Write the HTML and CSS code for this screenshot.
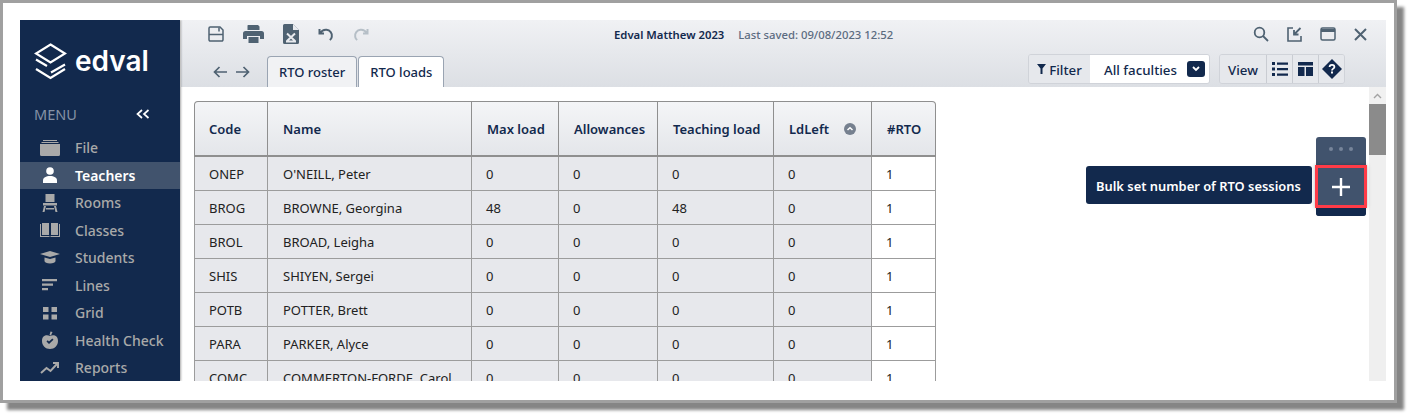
FILE: index.html
```html
<!DOCTYPE html>
<html>

<head>
    <title>Edval</title>
    <meta charset="utf-8">
    <link rel="stylesheet" href="styles.css">
</head>

<body>
    <div class="frame">
        <div class="app">
            <aside class="sidebar">
                <div class="logo">
                    <svg width="33" height="38" viewBox="0 0 33 38" fill="none" stroke="#fff" stroke-width="2.2">
                        <path d="M16.500 1.500 31 10.500 16.500 19.500 2 10.500Z" />
                        <path d="M2 16.500 13 23M31 21.500 17 29.500" />
                        <path d="M2 26 16.500 35 31 26" />
                    </svg>
                    <span class="wordmark">edval</span>
                </div>
                <div class="menu-title">
                    <span>MENU</span>
                    <svg width="14" height="10" viewBox="0 0 14 10" fill="none" stroke="#fff" stroke-width="1.7">
                        <path d="M6 1 L1.500 5 L6 9 M12.500 1 L8 5 L12.500 9" />
                    </svg>
                </div>
                <nav class="menu">
                    <a class="item">
                        <svg class="ico" viewBox="0 0 20 16"><path d="M3 0h14v1H3zM1.500 2h17v1h-17zM0 4h20v10.500a1.500 1.500 0 0 1-1.500 1.500h-17A1.500 1.500 0 0 1 0 14.500z" /></svg>
                        File
                    </a>
                    <a class="item active">
                        <svg class="ico" viewBox="0 0 20 16"><circle cx="10" cy="4" r="3.800" /><path d="M3 16v-2.500C3 10.500 6 9 10 9s7 1.500 7 4.500V16z" /></svg>
                        Teachers
                    </a>
                    <a class="item">
                        <svg class="ico" viewBox="0 0 20 18"><path d="M5.500 0h9v8h-9zM3 9h14v2.500H3zM4 12h2l-1.500 6H2.500zM14 12h2l1.500 6h-2zM6 14h8v1.500H6z" /></svg>
                        Rooms
                    </a>
                    <a class="item">
                        <svg class="ico" viewBox="0 0 20 16"><path d="M2 1h7v12H2zM11 1h7v12h-7zM0 2h1v12h8.500v1H0zM19 2h1v13h-9.500v-1H19z" /></svg>
                        Classes
                    </a>
                    <a class="item">
                        <svg class="ico" viewBox="0 0 20 16"><path d="M10 1 20 4 10 7 0 4zM4.500 7.500 10 9l5.500-1.500V11c0 1.500-2.500 2.500-5.500 2.500S4.500 12.500 4.500 11z" /></svg>
                        Students
                    </a>
                    <a class="item">
                        <svg class="ico" viewBox="0 0 20 16"><path d="M2 2h15v2.200H2zM2 6.500h11v2.200H2zM2 11h6v2.200H2z" /></svg>
                        Lines
                    </a>
                    <a class="item">
                        <svg class="ico" viewBox="0 0 20 16"><path d="M3 2h5.500v5H3zM11.500 2H17v5h-5.500zM3 9.500h5.500v5H3zM11.500 9.500H17v5h-5.500z" /></svg>
                        Grid
                    </a>
                    <a class="item">
                        <svg class="ico" viewBox="0 0 20 18"><path fill-rule="evenodd" d="M10 5C13 3.500 18 4 18 10c0 4.500-3.500 8-8 8s-8-3.500-8-8c0-6 5-6.500 8-5zM6.500 10.500 9 13l4.500-4.300-1.200-1.200L9 10.600 7.700 9.300z" /><path d="M9.500 4 10.500 0.500 12.500 1 11 4.500z" /></svg>
                        Health Check
                    </a>
                    <a class="item">
                        <svg class="ico ico-line" viewBox="0 0 20 16"><path d="M1 13 6.500 8l4 3L17 4" /><path d="M13 3h5v5" /></svg>
                        Reports
                    </a>
                </nav>
            </aside>

            <div class="main">
                <header class="top">
                    <div class="toolbar">
                        <div class="tools">
                            <svg class="tool" width="16" height="16" viewBox="0 0 16 16" fill="none" stroke="#4f6272" stroke-width="1.500">
                                <path d="M1 2.200A1.200 1.200 0 0 1 2.200 1h9.800L15 4v9.800a1.200 1.200 0 0 1-1.200 1.200H2.200A1.200 1.200 0 0 1 1 13.800z" />
                                <path d="M1 8.500h14M11 1.500v4" />
                            </svg>
                            <svg class="tool" width="21" height="18" viewBox="0 0 21 18" fill="#4f6272">
                                <path fill-rule="evenodd" d="M5 0h10l1.500 1.500V5H4.500V.5zM2.500 6h16A2.500 2.500 0 0 1 21 8.500V14h-4v-3H4v3H0V8.500A2.500 2.500 0 0 1 2.500 6z" />
                                <path d="M5.500 12h10v6h-10z" />
                            </svg>
                            <svg class="tool" width="16" height="20" viewBox="0 0 16 20">
                                <path fill="#4f6272" d="M1.500 0H10l6 6v12.500a1.500 1.500 0 0 1-1.500 1.500h-13A1.500 1.500 0 0 1 0 18.500v-17A1.500 1.500 0 0 1 1.500 0z" />
                                <path fill="#e8eaee" d="M10 0v6h6z" />
                                <path fill="none" stroke="#e8eaee" stroke-width="2" d="M4 9.500 12 17M12 9.500 4 17M3 17.500h10" />
                            </svg>
                            <svg class="tool" width="16" height="13" viewBox="0 0 16 13" fill="none" stroke="#4f6272" stroke-width="2">
                                <path d="M1.500 1v4.500H6M2 5.200C3.500 3 5.500 1.500 8.500 1.800c3.500.3 6 3.500 5.300 7-.2 1.300-1 2.500-2 3.200" />
                            </svg>
                            <svg class="tool" width="16" height="13" viewBox="0 0 16 13" fill="none" stroke="#b6bfc7" stroke-width="2">
                                <path d="M14.500 1v4.500H10M14 5.200C12.500 3 10.500 1.500 7.500 1.800c-3.500.3-6 3.500-5.300 7 .2 1.300 1 2.500 2 3.200" />
                            </svg>
                        </div>
                        <div class="title">
                            <b>Edval Matthew 2023</b>
                            <span>Last saved: 09/08/2023 12:52</span>
                        </div>
                        <div class="win">
                            <svg width="16" height="16" viewBox="0 0 16 16" fill="none" stroke="#4f6272" stroke-width="1.800">
                                <circle cx="6.500" cy="6.500" r="4.800" /><path d="M10 10l5 5" />
                            </svg>
                            <svg width="15" height="15" viewBox="0 0 15 15" fill="none" stroke="#4f6272" stroke-width="1.600">
                                <path d="M6 1H1v13h13V9" /><path stroke-width="1.800" d="M13.500 1 7 7.500M7 3v4.500h4.500" />
                            </svg>
                            <svg width="16" height="14" viewBox="0 0 16 14" fill="none" stroke="#4f6272" stroke-width="1.500">
                                <rect x="1" y="1" width="14" height="12" rx="1.500" /><path stroke-width="3" d="M1 3.500h14" />
                            </svg>
                            <svg width="13" height="13" viewBox="0 0 13 13" fill="none" stroke="#4f6272" stroke-width="2">
                                <path d="M1 1l11 11M12 1 1 12" />
                            </svg>
                        </div>
                    </div>
                    <div class="tabbar">
                        <div class="arrows">
                            <svg width="14" height="12" viewBox="0 0 14 12" fill="none" stroke="#4f6272" stroke-width="1.700">
                                <path d="M14 6H1.500M6.500 1 1.500 6l5 5" />
                            </svg>
                            <svg width="14" height="12" viewBox="0 0 14 12" fill="none" stroke="#4f6272" stroke-width="1.700">
                                <path d="M0 6h12.500M7.500 1l5 5-5 5" />
                            </svg>
                        </div>
                        <div class="tabs">
                            <a class="tab">RTO roster</a>
                            <a class="tab current">RTO loads</a>
                        </div>
                        <div class="controls">
                            <div class="group">
                                <div class="cell filter">
                                    <svg width="9" height="10" viewBox="0 0 9 10" fill="#12294d"><path d="M0 0h9L5.500 4.500V10h-2V4.500z" /></svg>
                                    <span class="lbl">Filter</span>
                                </div>
                                <div class="cell select">
                                    <span class="lbl">All faculties</span>
                                    <span class="caret">
                                        <svg width="8" height="6" viewBox="0 0 8 6" fill="none" stroke="#fff" stroke-width="1.800"><path d="M1 1l3 3 3-3" /></svg>
                                    </span>
                                </div>
                            </div>
                            <div class="group">
                                <div class="cell view"><span class="lbl">View</span></div>
                                <div class="cell icon-cell">
                                    <svg width="16" height="14" viewBox="0 0 16 14" fill="#12294d"><path d="M0 0h3v3H0zM5 .5h11v2.200H5zM0 5.500h3v3H0zM5 6h11v2.200H5zM0 11h3v3H0zM5 11.500h11v2.200H5z" /></svg>
                                </div>
                                <div class="cell icon-cell">
                                    <svg width="15" height="14" viewBox="0 0 15 14" fill="#12294d"><path d="M0 0h15v3.500H0zM0 5h6.500v9H0zM8 5h7v9H8z" /></svg>
                                </div>
                                <div class="cell icon-cell">
                                    <svg width="20" height="20" viewBox="0 0 20 20"><path fill="#12294d" d="M10 0l10 10-10 10L0 10z" /><path fill="none" stroke="#fff" stroke-width="1.800" d="M7.600 8c0-1.500 1-2.200 2.400-2.200S12.400 6.600 12.400 8c0 1.600-2.400 1.700-2.400 3.500" /><path fill="#fff" d="M9 12.500h2v2H9z" /></svg>
                                </div>
                            </div>
                        </div>
                    </div>
                </header>

                <div class="body">
                    <div class="content">
                        <table class="grid">
                            <thead>
                                <tr>
                                    <th class="c-code">Code</th>
                                    <th class="c-name">Name</th>
                                    <th class="c-max">Max load</th>
                                    <th class="c-allow">Allowances</th>
                                    <th class="c-teach">Teaching load</th>
                                    <th class="c-left">
                                        <span class="sorted">LdLeft
                                            <svg width="12" height="12" viewBox="0 0 12 12"><circle cx="6" cy="6" r="6" fill="#76808f" /><path d="M3.500 7 6 4.700 8.500 7" fill="none" stroke="#fff" stroke-width="1.500" /></svg>
                                        </span>
                                    </th>
                                    <th class="c-rto">#RTO</th>
                                </tr>
                            </thead>
                            <tbody>
                                <tr><td>ONEP</td><td>O'NEILL, Peter</td><td>0</td><td>0</td><td>0</td><td>0</td><td class="edit">1</td></tr>
                                <tr><td>BROG</td><td>BROWNE, Georgina</td><td>48</td><td>0</td><td>48</td><td>0</td><td class="edit">1</td></tr>
                                <tr><td>BROL</td><td>BROAD, Leigha</td><td>0</td><td>0</td><td>0</td><td>0</td><td class="edit">1</td></tr>
                                <tr><td>SHIS</td><td>SHIYEN, Sergei</td><td>0</td><td>0</td><td>0</td><td>0</td><td class="edit">1</td></tr>
                                <tr><td>POTB</td><td>POTTER, Brett</td><td>0</td><td>0</td><td>0</td><td>0</td><td class="edit">1</td></tr>
                                <tr><td>PARA</td><td>PARKER, Alyce</td><td>0</td><td>0</td><td>0</td><td>0</td><td class="edit">1</td></tr>
                                <tr><td>COMC</td><td>COMMERTON-FORDE, Carol</td><td>0</td><td>0</td><td>0</td><td>0</td><td class="edit">1</td></tr>
                            </tbody>
                        </table>
                    </div>
                    <div class="scrollbar">
                        <div class="scroll-up">
                            <svg width="9" height="6" viewBox="0 0 9 6" fill="none" stroke="#a3a3a3" stroke-width="1.400"><path d="M1 5l3.500-3.500L8 5" /></svg>
                        </div>
                        <div class="thumb"></div>
                    </div>

                    <div class="fab">
                        <div class="fab-dots"><i></i><i></i><i></i></div>
                        <div class="fab-plus">
                            <svg width="18" height="18" viewBox="0 0 18 18" fill="none" stroke="#fff" stroke-width="2.400"><path d="M9 0v18M0 9h18" /></svg>
                        </div>
                        <div class="fab-foot"></div>
                    </div>
                    <div class="tooltip">Bulk set number of RTO sessions</div>
                </div>
            </div>
        </div>
    </div>
</body>

</html>
```

FILE: styles.css
```css
html, body {
    margin: 0;
    background: #fff;
}

body {
    width: 1412px;
    height: 418px;
    overflow: hidden;
    font-family: "Noto Sans", sans-serif;
    color: #12294d;
}

.frame {
    box-sizing: border-box;
    width: 1397px;
    height: 403px;
    padding: 17px 8px 19px 17px;
    border: 3px solid #a0a0a0;
    background: #fff;
    box-shadow: 7px 7px 3px #858585;
}

.app {
    display: flex;
    height: 361px;
    overflow: hidden;
}

/* sidebar */
.sidebar {
    flex: 0 0 160px;
    background: #12294d;
    box-shadow: 1px 0 2px rgba(0, 0, 0, .35);
    z-index: 2;
}

.logo {
    display: flex;
    align-items: center;
    height: 40px;
    padding: 22px 0 0 14px;
}

.wordmark {
    margin: -2px 0 0 8px;
    font-family: "Inter", sans-serif;
    font-size: 28px;
    font-weight: 600;
    color: #fff;
}

.menu-title {
    display: flex;
    justify-content: space-between;
    align-items: center;
    margin-top: 22px;
    padding: 0 30px 0 14px;
    font-size: 14.500px;
    line-height: 20px;
    color: #8592a6;
}

.menu {
    margin-top: 10px;
}

.item {
    display: flex;
    align-items: center;
    height: 27.500px;
    padding-left: 20px;
    font-size: 14px;
    font-weight: 500;
    color: #a9a9a9;
}

.item.active {
    background: #41536d;
    font-weight: 600;
    color: #fff;
}

.ico {
    flex: none;
    width: 20px;
    height: 18px;
    margin-right: 15px;
    fill: #a9a9a9;
}

.ico-line {
    fill: none;
    stroke: #a9a9a9;
    stroke-width: 2;
}

.active .ico {
    fill: #fff;
}

/* header */
.main {
    flex: 1;
    display: flex;
    flex-direction: column;
    margin-left: 1px;
    min-width: 0;
}

.top {
    flex: 0 0 67px;
    background: linear-gradient(#f0f1f4, #dcdfe4);
}

.toolbar {
    display: flex;
    align-items: center;
    height: 28px;
    padding: 0 19px 0 27px;
}

.tools {
    flex: none;
    display: flex;
    align-items: center;
    width: 406px;
}

.tool {
    margin-right: 19px;
}

.title {
    margin-right: auto;
    font-size: 11.300px;
    white-space: nowrap;
    color: #12294d;
}

.title b {
    font-weight: 600;
    margin-right: 11px;
}

.title span {
    font-weight: 500;
    color: #5b6b80;
}

.win {
    display: flex;
    align-items: center;
    gap: 18px;
}

.tabbar {
    display: flex;
    align-items: flex-end;
    height: 39px;
}

.arrows {
    display: flex;
    gap: 9px;
    align-items: center;
    height: 30px;
    padding-left: 32px;
}

.tabs {
    display: flex;
    gap: 1px;
    margin-left: 17px;
}

.tab {
    box-sizing: border-box;
    height: 31px;
    padding: 0 11px;
    border: 1px solid #9aa4b2;
    border-bottom: 0;
    border-radius: 4px 4px 0 0;
    background: #f1f2f4;
    font-size: 13px;
    font-weight: 500;
    line-height: 30px;
}

.tab.current {
    background: #fff;
}

.controls {
    display: flex;
    gap: 9px;
    margin-left: auto;
    margin-right: 41px;
    margin-bottom: 3px;
}

.group {
    display: flex;
    height: 28px;
    border: 1px solid #d0d3d9;
    border-radius: 3px;
    overflow: hidden;
}

.cell {
    display: flex;
    align-items: center;
    justify-content: center;
    font-size: 13.300px;
    font-weight: 500;
    border-left: 1px solid #c9ccd2;
}

.cell:first-child {
    border-left: 0;
}

.lbl {
    padding-top: 2px;
}

.filter {
    gap: 3px;
    width: 61px;
    background: #e6e8ec;
}

.select {
    justify-content: space-between;
    width: 119px;
    padding: 0 4px 0 14px;
    box-sizing: border-box;
    background: #fff;
    border-left: 0;
}

.caret {
    display: flex;
    align-items: center;
    justify-content: center;
    width: 18px;
    height: 16px;
    border-radius: 3px;
    background: #12294d;
}

.view {
    width: 46px;
    background: #e6e8ec;
}

.icon-cell {
    width: 25px;
    background: #e6e8ec;
}

/* table area */
.body {
    flex: 1;
    display: flex;
    position: relative;
    min-height: 0;
}

.content {
    flex: 1;
    padding: 14px 0 0 13px;
    overflow: hidden;
}

.grid {
    width: 742px;
    table-layout: fixed;
    border-collapse: separate;
    border-spacing: 0;
    font-size: 13px;
}

.grid th {
    box-sizing: border-box;
    height: 56px;
    padding: 0 0 0 15px;
    border-top: 1px solid #8f8f8f;
    border-right: 1px solid #8f8f8f;
    border-bottom: 2px solid #8f8f8f;
    background: linear-gradient(#f4f5f7, #e4e6ea);
    font-weight: 600;
    text-align: left;
    color: #12294d;
}

.grid th:first-child {
    padding-left: 14px;
    border-left: 1px solid #8f8f8f;
    border-top-left-radius: 4px;
}

.grid th:last-child {
    border-top-right-radius: 4px;
}

.c-code { width: 74px; }
.c-name { width: 204px; }
.c-max { width: 87px; }
.c-allow { width: 99px; }
.c-teach { width: 116px; }
.c-left { width: 98px; }
.c-rto { width: 64px; }

.sorted {
    display: flex;
    align-items: center;
    gap: 15px;
}

.grid td {
    box-sizing: border-box;
    height: 34px;
    padding: 0 0 0 14px;
    border-right: 1px solid #9c9c9c;
    border-bottom: 1px solid #9c9c9c;
    background: #e7e8ec;
    color: #222;
    white-space: nowrap;
    overflow: hidden;
}

.grid td:first-child {
    border-left: 1px solid #9c9c9c;
}

.grid td:nth-child(2) {
    padding-left: 15px;
}

.grid td.edit {
    background: #fff;
}

.scrollbar {
    flex: 0 0 17px;
    background: #efefef;
}

.scroll-up {
    display: flex;
    align-items: center;
    justify-content: center;
    height: 17px;
    background: #f1f1f1;
}

.thumb {
    height: 51px;
    background: #8b8b8b;
}

/* floating button and its tooltip */
.fab {
    position: absolute;
    top: 50px;
    right: 20px;
    width: 50px;
    height: 79px;
    border-radius: 3px;
    background: #41536d;
}

.fab-dots {
    display: flex;
    justify-content: center;
    gap: 6px;
    padding-top: 10px;
}

.fab-dots i {
    width: 4px;
    height: 4px;
    border-radius: 50%;
    background: #76859a;
}

.fab-plus {
    position: absolute;
    top: 28px;
    left: -1px;
    box-sizing: border-box;
    display: flex;
    align-items: center;
    justify-content: center;
    width: 52px;
    height: 43px;
    border: 3px solid #ff3b47;
    background: #41536d;
    box-shadow: 0 0 4px rgba(0, 0, 0, .3);
}

.fab-foot {
    position: absolute;
    left: 0;
    bottom: 0;
    width: 50px;
    height: 8px;
    border-radius: 0 0 3px 3px;
    background: #12294d;
}

.tooltip {
    position: absolute;
    top: 79px;
    right: 74px;
    width: 226px;
    height: 38px;
    box-sizing: border-box;
    padding-left: 10px;
    border-radius: 3px;
    background: #12294d;
    font-size: 12.900px;
    font-weight: 600;
    line-height: 40px;
    color: #fff;
}
```
